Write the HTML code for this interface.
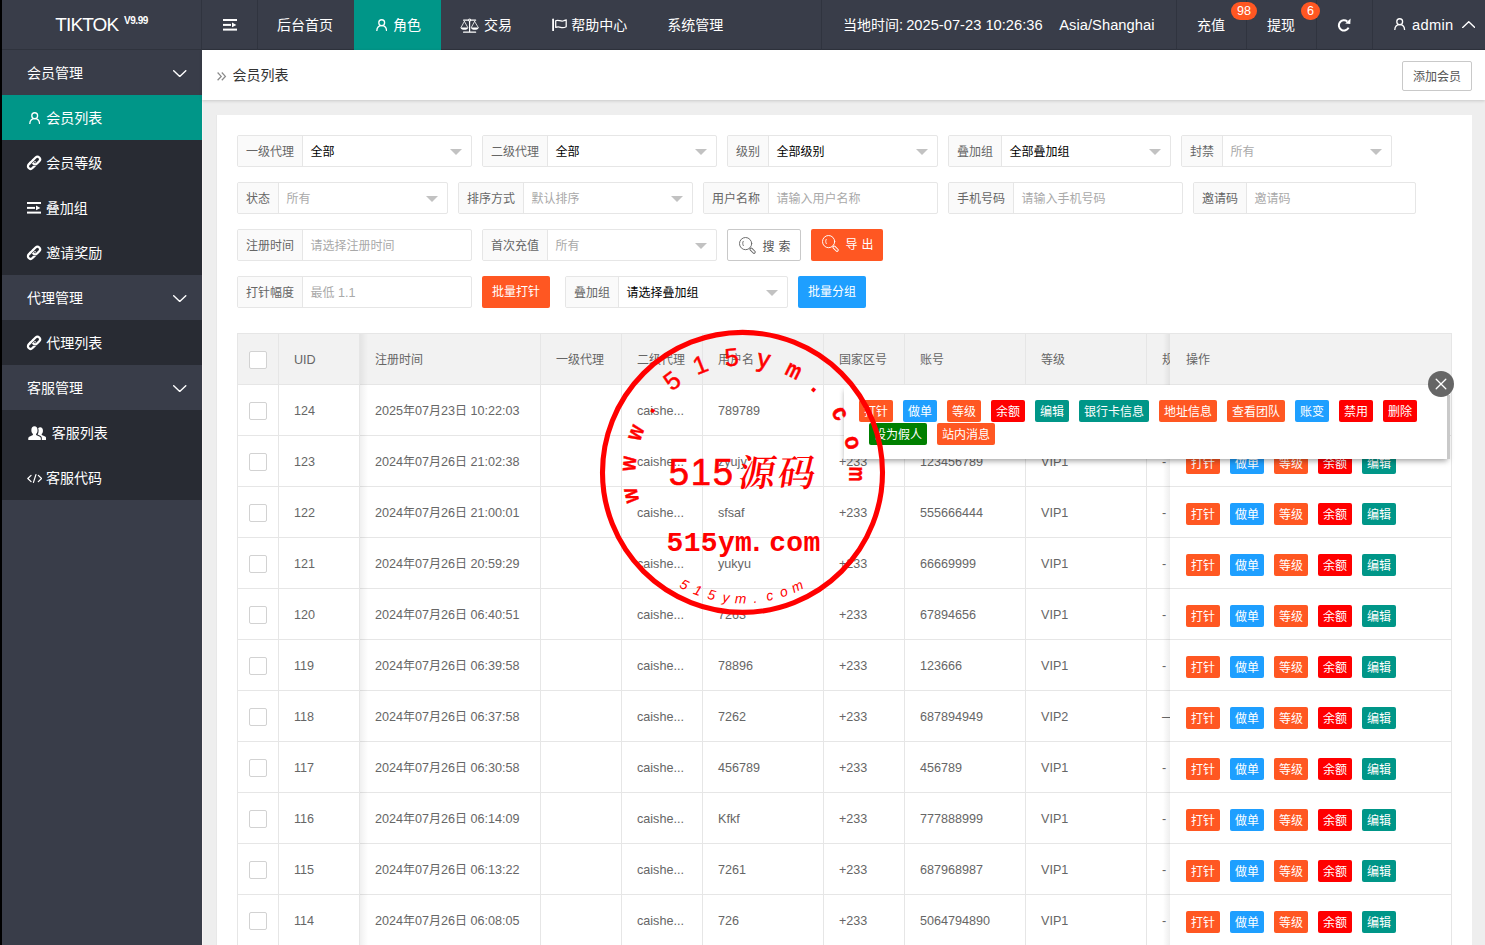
<!DOCTYPE html><html lang="zh-CN"><head><meta charset="utf-8"><title>会员列表</title><style>
*{box-sizing:border-box;margin:0;padding:0}
html,body{width:1485px;height:945px;overflow:hidden}
body{position:relative;background:#eee;font-family:"Liberation Sans","Noto Sans CJK SC",sans-serif;font-size:12px;color:#666;line-height:1}
.l{font-size:1.05em}
.abs{position:absolute}
#strip{left:0;top:0;width:2px;height:945px;background:#000;z-index:50}
#header{left:2px;top:0;width:1483px;height:50px;background:#393D49;color:#fff;font-size:14px;border-bottom:1px solid #2f333d}
#header .sep{position:absolute;top:0;width:1px;height:50px;background:#30343f}
#header .t{position:absolute;top:0;height:50px;line-height:50px;white-space:nowrap}
#header svg{position:absolute}
#side{left:2px;top:50px;width:200px;height:895px;background:#393D49;color:#fff;font-size:14px}
#side .it{position:absolute;left:0;width:200px;height:45px;line-height:45px;white-space:nowrap}
#side .sub{background:#282B33}
#side .act{background:#009688}
#side .it span.tx{position:absolute;top:1px}
#side svg{position:absolute}
#crumb{left:202px;top:50px;width:1283px;height:50px;background:#fff;box-shadow:0 1px 3px 0 rgba(0,0,0,.16);z-index:2}
#card{left:217px;top:115px;width:1255px;height:900px;background:#fff;box-shadow:-1px 0 0 #e8e8e8}
.grp{position:absolute;height:32px;border:1px solid #e6e6e6;border-radius:2px;background:#fff;overflow:hidden}
.grp .lb{position:absolute;left:0;top:0;height:30px;line-height:33px;background:#fafafa;border-right:1px solid #e6e6e6;text-align:center;color:#666}
.grp .v{position:absolute;top:0;height:30px;line-height:33px;color:#000;white-space:nowrap}
.grp .ph{color:#a9a9a9}
.grp .ar{position:absolute;top:12.5px;width:0;height:0;border:6px solid transparent;border-top-color:#c2c2c2;border-bottom-width:0}
.btn{position:absolute;height:32px;line-height:32px;border-radius:2px;color:#fff;text-align:center;white-space:nowrap}
.sb{position:absolute;height:22px;line-height:24px;overflow:hidden;width:34px;border-radius:2px;color:#fff;text-align:center;white-space:nowrap;font-size:12px}
.c-o{background:#FF5722}.c-b{background:#1E9FFF}.c-r{background:#FF0000}.c-g{background:#009688}.c-gr{background:#008000}
#tbl{left:237px;top:333px;width:1215px;height:620px;border-left:1px solid #e6e6e6;border-top:1px solid #e6e6e6;overflow:hidden}
.row{position:absolute;left:0;width:1215px;border-bottom:1px solid #e6e6e6;background:#fff}
.row.hd{background:#f2f2f2}
.cell{position:absolute;top:0;height:100%;border-right:1px solid #e6e6e6;padding-left:15px;white-space:nowrap;overflow:hidden}
.cell span.c{position:absolute;left:15px;top:50%;height:20px;line-height:20px;margin-top:-9px}
.ck{position:absolute;left:11px;top:50%;margin-top:-8px;width:18px;height:18px;border:1px solid #d2d2d2;border-radius:2px;background:#fff}
</style></head><body>
<div id="strip" class="abs"></div>
<div id="header" class="abs">
<div class="t" style="left:53.3px;font-size:19px;letter-spacing:-0.9px">TIKTOK</div>
<div class="t" style="left:122px;top:-4.5px;font-size:10px;font-weight:bold;letter-spacing:-0.45px">V9.99</div>
<div class="sep" style="left:199px"></div>
<div class="sep" style="left:255px"></div>
<div class="sep" style="left:819px"></div>
<div class="sep" style="left:1174px"></div>
<div class="sep" style="left:1244px"></div>
<div class="sep" style="left:1314px"></div>
<div class="sep" style="left:1370px"></div>
<svg style="left:221.2px;top:19px" width="14" height="12" viewBox="0 0 14 12" fill="#fff"><rect x="0" y="0" width="14" height="2"/><rect x="0" y="4.9" width="8" height="2"/><rect x="0" y="9.6" width="14" height="2"/><path d="M9 3.6L13.4 5.9L9 8.2Z"/></svg>
<div class="t" style="left:275px">后台首页</div>
<div class="abs" style="left:352px;top:0;width:87px;height:50px;background:#009688"></div>
<svg style="left:373.6px;top:18.8px" width="11.4" height="12.2" viewBox="0 0 12 13" fill="none" stroke="#fff" stroke-width="1.4" stroke-linecap="round"><circle cx="6" cy="3.9" r="3.1"/><path d="M0.8 12.6C0.9 9.2 3 7.1 6 7.1S11.1 9.2 11.2 12.6"/></svg>
<div class="t" style="left:391px">角色</div>
<svg style="left:458px;top:17.5px" width="20" height="15" viewBox="0 0 20 15" fill="none" stroke="#fff" stroke-linecap="round" stroke-linejoin="round"><g fill="#fff" stroke="none"><rect x="3" y="1.5" width="13.2" height="1.35" rx="0.6"/><rect x="9" y="2" width="1.2" height="12"/><rect x="3" y="13.5" width="13.2" height="1.3" rx="0.6"/></g><circle cx="9.6" cy="2" r="1.5" fill="#fff" stroke="none"/><circle cx="9.6" cy="2" r="0.5" fill="#393D49" stroke="none"/><path d="M4.4 3.4L1 9.5M4.4 3.4L7.8 9.5M14.6 3.4L11.3 9.5M14.6 3.4L18.3 9.5" stroke-width="0.8"/><path d="M0.6 9.5H8.1C8.1 11 6.5 11.8 4.35 11.8S0.6 11 0.6 9.5Z" fill="#fff" stroke="none"/><path d="M11 9.5H18.6C18.6 11 17 11.8 14.8 11.8S11 11 11 9.5Z" fill="#fff" stroke="none"/></svg>
<div class="t" style="left:482px">交易</div>
<svg style="left:549.8px;top:18.4px" width="16" height="13" viewBox="0 0 16 13" fill="none" stroke="#fff" stroke-linecap="round" stroke-linejoin="round"><path d="M1.1 1.3V12.4" stroke-width="1.8"/><path d="M3.7 2.7C6 1.3 8.4 3.7 11 3C12.4 2.6 13.4 2.1 14.2 1.8V8.7C12.2 9.8 10.6 10.1 8.6 9.3C6.8 8.6 5.4 8.5 3.7 9.4Z" stroke-width="1.25"/></svg>
<div class="t" style="left:569.3px">帮助中心</div>
<div class="t" style="left:665.3px">系统管理</div>
<div class="t" style="left:841px">当地时间<span class="l">:</span></div>
<div class="t" style="left:904.2px"><span class="l">2025-07-23 10:26:36</span></div>
<div class="t" style="left:1057.2px;letter-spacing:0.05px"><span class="l">Asia/Shanghai</span></div>
<div class="t" style="left:1195px">充值</div>
<div class="t" style="left:1265px">提现</div>
<div class="abs" style="left:1229px;top:2px;width:26px;height:18px;line-height:19.5px;border-radius:9px;background:#FF5722;font-size:12px;text-align:center"><span class="l">98</span></div>
<div class="abs" style="left:1299px;top:2px;width:19px;height:18px;line-height:19.5px;border-radius:9px;background:#FF5722;font-size:12px;text-align:center"><span class="l">6</span></div>
<svg style="left:1335px;top:17.8px" width="14.4" height="13.8" viewBox="0 0 14.4 13.8" fill="none" stroke="#fff" stroke-width="2" stroke-linecap="butt"><path d="M11.6 9.6A5.1 5.1 0 1 1 10.3 3.5"/><path d="M8.2 5.4L13.3 5.9L13.6 0.5Z" fill="#fff" stroke="none"/></svg>
<svg style="left:1392.3px;top:18.2px" width="11.4" height="12.2" viewBox="0 0 12 13" fill="none" stroke="#fff" stroke-width="1.4" stroke-linecap="round"><circle cx="6" cy="3.9" r="3.1"/><path d="M0.8 12.6C0.9 9.2 3 7.1 6 7.1S11.1 9.2 11.2 12.6"/></svg>
<div class="t" style="left:1410px;letter-spacing:0.3px"><span class="l">admin</span></div>
<svg style="left:1459.6px;top:21.3px" width="13.5" height="7.2" viewBox="0 0 13.5 7.2" fill="none" stroke="#fff" stroke-width="1.4" stroke-linecap="round" stroke-linejoin="round"><path d="M0.7 6.5L6.75 0.7L12.8 6.5"/></svg>
</div>
<div id="side" class="abs">
<div class="it" style="top:0px">
<span class="tx" style="left:25px">会员管理</span>
<svg style="left:171px;top:19.6px" width="13.5" height="7.2" viewBox="0 0 13.5 7.2" fill="none" stroke="#fff" stroke-width="1.4" stroke-linecap="round" stroke-linejoin="round"><path d="M0.7 0.7L6.75 6.5L12.8 0.7"/></svg>
</div>
<div class="it sub act" style="top:45px">
<svg style="left:26.6px;top:16.6px" width="11.4" height="12.2" viewBox="0 0 12 13" fill="none" stroke="#fff" stroke-width="1.4" stroke-linecap="round"><circle cx="6" cy="3.9" r="3.1"/><path d="M0.8 12.6C0.9 9.2 3 7.1 6 7.1S11.1 9.2 11.2 12.6"/></svg>
<span class="tx" style="left:44.3px">会员列表</span>
</div>
<div class="it sub" style="top:90px">
<svg style="left:24.2px;top:14.8px" width="16" height="16" viewBox="0 0 16 16" fill="none" stroke="#fff" stroke-width="2.45" stroke-linecap="round"><g transform="translate(8 7.8) scale(0.93) rotate(-45) translate(-8 -8)"><rect x="0" y="5.2" width="9" height="5.6" rx="2.8"/><rect x="7" y="5.2" width="9" height="5.6" rx="2.8" stroke="#282B33" stroke-width="3.9"/><rect x="7" y="5.2" width="9" height="5.6" rx="2.8"/><path d="M6.4 5.2H9" stroke="#282B33" stroke-width="3.7" stroke-linecap="butt"/><path d="M5 5.2H9.4"/></g></svg>
<span class="tx" style="left:44.3px">会员等级</span>
</div>
<div class="it sub" style="top:135px">
<svg style="left:25.4px;top:17.1px" width="14" height="12" viewBox="0 0 14 12" fill="#fff"><rect x="0" y="0" width="14" height="2"/><rect x="0" y="4.9" width="8" height="2"/><rect x="0" y="9.6" width="14" height="2"/><path d="M9 3.6L13.4 5.9L9 8.2Z"/></svg>
<span class="tx" style="left:43.8px">叠加组</span>
</div>
<div class="it sub" style="top:180px">
<svg style="left:24.2px;top:14.8px" width="16" height="16" viewBox="0 0 16 16" fill="none" stroke="#fff" stroke-width="2.45" stroke-linecap="round"><g transform="translate(8 7.8) scale(0.93) rotate(-45) translate(-8 -8)"><rect x="0" y="5.2" width="9" height="5.6" rx="2.8"/><rect x="7" y="5.2" width="9" height="5.6" rx="2.8" stroke="#282B33" stroke-width="3.9"/><rect x="7" y="5.2" width="9" height="5.6" rx="2.8"/><path d="M6.4 5.2H9" stroke="#282B33" stroke-width="3.7" stroke-linecap="butt"/><path d="M5 5.2H9.4"/></g></svg>
<span class="tx" style="left:44.3px">邀请奖励</span>
</div>
<div class="it" style="top:225px">
<span class="tx" style="left:25px">代理管理</span>
<svg style="left:171px;top:19.6px" width="13.5" height="7.2" viewBox="0 0 13.5 7.2" fill="none" stroke="#fff" stroke-width="1.4" stroke-linecap="round" stroke-linejoin="round"><path d="M0.7 0.7L6.75 6.5L12.8 0.7"/></svg>
</div>
<div class="it sub" style="top:270px">
<svg style="left:24.2px;top:14.8px" width="16" height="16" viewBox="0 0 16 16" fill="none" stroke="#fff" stroke-width="2.45" stroke-linecap="round"><g transform="translate(8 7.8) scale(0.93) rotate(-45) translate(-8 -8)"><rect x="0" y="5.2" width="9" height="5.6" rx="2.8"/><rect x="7" y="5.2" width="9" height="5.6" rx="2.8" stroke="#282B33" stroke-width="3.9"/><rect x="7" y="5.2" width="9" height="5.6" rx="2.8"/><path d="M6.4 5.2H9" stroke="#282B33" stroke-width="3.7" stroke-linecap="butt"/><path d="M5 5.2H9.4"/></g></svg>
<span class="tx" style="left:44.3px">代理列表</span>
</div>
<div class="it" style="top:315px">
<span class="tx" style="left:25px">客服管理</span>
<svg style="left:171px;top:19.6px" width="13.5" height="7.2" viewBox="0 0 13.5 7.2" fill="none" stroke="#fff" stroke-width="1.4" stroke-linecap="round" stroke-linejoin="round"><path d="M0.7 0.7L6.75 6.5L12.8 0.7"/></svg>
</div>
<div class="it sub" style="top:360px">
<svg style="left:25.5px;top:15.9px" width="18.5" height="14.5" viewBox="0 0 19 15" fill="#fff"><path d="M6.6 0.3C8.6 0.3 9.8 1.9 9.8 4.3C9.8 6 9.2 7.4 8.3 8.2V9.2L12.2 11C12.9 11.4 13.2 12 13.2 12.8V14.6H0.2V12.8C0.2 12 0.5 11.4 1.2 11L5 9.2V8.2C4.1 7.4 3.4 6 3.4 4.3C3.4 1.9 4.6 0.3 6.6 0.3Z"/><path d="M12.6 1.4C14.4 1.4 15.4 2.8 15.4 4.8C15.4 6.3 14.9 7.5 14.1 8.2V9.2L17.7 10.9C18.4 11.3 18.7 11.8 18.7 12.6V14.6H14.2V12.6C14.2 11.4 13.7 10.6 12.6 10.1L9.9 8.8C10.6 7.7 10.9 6.3 10.9 4.6C10.9 3.6 10.7 2.7 10.4 2.2C11 1.7 11.7 1.4 12.6 1.4Z"/></svg>
<span class="tx" style="left:49.8px">客服列表</span>
</div>
<div class="it sub" style="top:405px">
<svg style="left:24.5px;top:18.6px" width="15.4" height="9" viewBox="0 0 16 9.4" fill="none" stroke="#fff" stroke-width="1.3" stroke-linecap="round" stroke-linejoin="round"><path d="M4.2 1.4L0.8 4.7L4.2 8M11.8 1.4L15.2 4.7L11.8 8M9.3 0.7L6.7 8.7"/></svg>
<span class="tx" style="left:43.9px">客服代码</span>
</div>
</div>
<div id="crumb" class="abs">
<svg class="abs" style="left:15.3px;top:22px" width="9.4" height="8.8" viewBox="0 0 9.4 8.8" fill="none" stroke="#8a8a8a" stroke-width="1.25" stroke-linejoin="miter"><path d="M0.6 0.5L4.2 4.4L0.6 8.3M4.8 0.5L8.4 4.4L4.8 8.3"/></svg>
<div class="abs" style="left:30.4px;top:0;height:50px;line-height:50px;font-size:14px;color:#333">会员列表</div>
<div class="abs" style="left:1200px;top:11px;width:70px;height:30px;line-height:30px;border:1px solid #c9c9c9;border-radius:2px;text-align:center;color:#555;background:#fff">添加会员</div>
</div>
<div class="abs" style="left:202px;top:100px;width:1px;height:845px;background:#f8f3f3"></div>
<div id="card" class="abs"></div>
<div class="grp" style="left:237px;top:135px;width:235px"><div class="lb" style="width:65px">一级代理</div><div class="v" style="left:72.6px">全部</div><div class="ar" style="left:212px"></div></div>
<div class="grp" style="left:482px;top:135px;width:235px"><div class="lb" style="width:65px">二级代理</div><div class="v" style="left:72.6px">全部</div><div class="ar" style="left:212px"></div></div>
<div class="grp" style="left:727px;top:135px;width:211px"><div class="lb" style="width:41px">级别</div><div class="v" style="left:48.6px">全部级别</div><div class="ar" style="left:188px"></div></div>
<div class="grp" style="left:948px;top:135px;width:223px"><div class="lb" style="width:53px">叠加组</div><div class="v" style="left:60.6px">全部叠加组</div><div class="ar" style="left:200px"></div></div>
<div class="grp" style="left:1181px;top:135px;width:211px"><div class="lb" style="width:41px">封禁</div><div class="v ph" style="left:48.6px">所有</div><div class="ar" style="left:188px"></div></div>
<div class="grp" style="left:237px;top:182px;width:211px"><div class="lb" style="width:41px">状态</div><div class="v ph" style="left:48.6px">所有</div><div class="ar" style="left:188px"></div></div>
<div class="grp" style="left:458px;top:182px;width:235px"><div class="lb" style="width:65px">排序方式</div><div class="v ph" style="left:72.6px">默认排序</div><div class="ar" style="left:212px"></div></div>
<div class="grp" style="left:703px;top:182px;width:235px"><div class="lb" style="width:65px">用户名称</div><div class="v ph" style="left:72.6px">请输入用户名称</div></div>
<div class="grp" style="left:948px;top:182px;width:235px"><div class="lb" style="width:65px">手机号码</div><div class="v ph" style="left:72.6px">请输入手机号码</div></div>
<div class="grp" style="left:1193px;top:182px;width:223px"><div class="lb" style="width:53px">邀请码</div><div class="v ph" style="left:60.6px">邀请码</div></div>
<div class="grp" style="left:237px;top:229px;width:235px"><div class="lb" style="width:65px">注册时间</div><div class="v ph" style="left:72.6px">请选择注册时间</div></div>
<div class="grp" style="left:482px;top:229px;width:235px"><div class="lb" style="width:65px">首次充值</div><div class="v ph" style="left:72.6px">所有</div><div class="ar" style="left:212px"></div></div>
<div class="btn" style="left:727px;top:229px;width:74px;border:1px solid #c9c9c9;background:#fff;color:#555;line-height:31px"><svg style="position:absolute;left:11px;top:6.9px" width="17" height="17" viewBox="0 0 17 17" fill="none" stroke="#666" stroke-width="0.95" stroke-linecap="round"><circle cx="6.6" cy="6.6" r="6.1"/><path d="M4.2 4.3C3.5 5.3 3.5 7.2 4.3 8.6" stroke-width="0.9"/><rect x="-3.2" y="-1.2" width="6.4" height="2.4" rx="1.2" transform="translate(13.6 13.7) rotate(45)"/></svg><span style="position:absolute;left:34.4px;top:1.5px;letter-spacing:4px">搜索</span></div>
<div class="btn c-o" style="left:811px;top:229px;width:72px"><svg style="position:absolute;left:10.9px;top:6.1px" width="17" height="17" viewBox="0 0 17 17" fill="none" stroke="#fff" stroke-width="0.95" stroke-linecap="round"><circle cx="6.6" cy="6.6" r="6.1"/><path d="M4.2 4.3C3.5 5.3 3.5 7.2 4.3 8.6" stroke-width="0.9"/><rect x="-3.2" y="-1.2" width="6.4" height="2.4" rx="1.2" transform="translate(13.6 13.7) rotate(45)"/></svg><span style="position:absolute;left:34.5px;top:0px;letter-spacing:4px">导出</span></div>
<div class="grp" style="left:237px;top:276px;width:235px"><div class="lb" style="width:65px">打针幅度</div><div class="v ph" style="left:72.6px">最低 <span class="l">1.1</span></div></div>
<div class="btn c-o" style="left:482px;top:276px;width:68px;line-height:32.5px">批量打针</div>
<div class="grp" style="left:565px;top:276px;width:223px"><div class="lb" style="width:53px">叠加组</div><div class="v" style="left:60.6px">请选择叠加组</div><div class="ar" style="left:200px"></div></div>
<div class="btn c-b" style="left:798px;top:276px;width:68px;line-height:32.5px">批量分组</div>
<div id="tbl" class="abs">
<div class="row hd" style="top:0px;height:51px"><div class="cell" style="left:0px;width:41px"><i class="ck"></i></div><div class="cell" style="left:41px;width:81px"><span class="c"><span class="l">UID</span></span></div><div class="cell" style="left:122px;width:181px"><span class="c">注册时间</span></div><div class="cell" style="left:303px;width:81px"><span class="c">一级代理</span></div><div class="cell" style="left:384px;width:81px"><span class="c">二级代理</span></div><div class="cell" style="left:465px;width:121px"><span class="c">用户名</span></div><div class="cell" style="left:586px;width:81px"><span class="c">国家区号</span></div><div class="cell" style="left:667px;width:121px"><span class="c">账号</span></div><div class="cell" style="left:788px;width:121px"><span class="c">等级</span></div><div class="cell" style="left:909px;width:121px"><span class="c">规则</span></div><div class="abs" style="left:932px;top:0;width:282px;height:100%;background:#f2f2f2;border-right:1px solid #e6e6e6"><span class="abs" style="left:16px;top:50%;height:20px;line-height:20px;margin-top:-9px">操作</span></div></div>
<div class="row" style="top:51px;height:51px"><div class="cell" style="left:0px;width:41px"><i class="ck"></i></div><div class="cell" style="left:41px;width:81px"><span class="c"><span class="l">124</span></span></div><div class="cell" style="left:122px;width:181px"><span class="c"><span class="l">2025</span>年<span class="l">07</span>月<span class="l">23</span>日 <span class="l">10:22:03</span></span></div><div class="cell" style="left:303px;width:81px"></div><div class="cell" style="left:384px;width:81px"><span class="c"><span class="l">caishe...</span></span></div><div class="cell" style="left:465px;width:121px"><span class="c"><span class="l">789789</span></span></div><div class="cell" style="left:586px;width:81px"><span class="c"><span class="l">+233</span></span></div><div class="cell" style="left:667px;width:121px"><span class="c"><span class="l">888999</span></span></div><div class="cell" style="left:788px;width:121px"><span class="c"><span class="l">VIP1</span></span></div><div class="cell" style="left:909px;width:121px"><span class="c"><span class="l">-</span></span></div><div class="abs" style="left:932px;top:0;width:282px;height:100%;background:#fff;border-right:1px solid #e6e6e6"><span class="sb c-o" style="left:16px;top:16px">打针</span><span class="sb c-b" style="left:60px;top:16px">做单</span><span class="sb c-o" style="left:104px;top:16px">等级</span><span class="sb c-r" style="left:148px;top:16px">余额</span><span class="sb c-g" style="left:192px;top:16px">编辑</span></div></div>
<div class="row" style="top:102px;height:51px"><div class="cell" style="left:0px;width:41px"><i class="ck"></i></div><div class="cell" style="left:41px;width:81px"><span class="c"><span class="l">123</span></span></div><div class="cell" style="left:122px;width:181px"><span class="c"><span class="l">2024</span>年<span class="l">07</span>月<span class="l">26</span>日 <span class="l">21:02:38</span></span></div><div class="cell" style="left:303px;width:81px"></div><div class="cell" style="left:384px;width:81px"><span class="c"><span class="l">caishe...</span></span></div><div class="cell" style="left:465px;width:121px"><span class="c"><span class="l">zyujy</span></span></div><div class="cell" style="left:586px;width:81px"><span class="c"><span class="l">+233</span></span></div><div class="cell" style="left:667px;width:121px"><span class="c"><span class="l">123456789</span></span></div><div class="cell" style="left:788px;width:121px"><span class="c"><span class="l">VIP1</span></span></div><div class="cell" style="left:909px;width:121px"><span class="c"><span class="l">-</span></span></div><div class="abs" style="left:932px;top:0;width:282px;height:100%;background:#fff;border-right:1px solid #e6e6e6"><span class="sb c-o" style="left:16px;top:16px">打针</span><span class="sb c-b" style="left:60px;top:16px">做单</span><span class="sb c-o" style="left:104px;top:16px">等级</span><span class="sb c-r" style="left:148px;top:16px">余额</span><span class="sb c-g" style="left:192px;top:16px">编辑</span></div></div>
<div class="row" style="top:153px;height:51px"><div class="cell" style="left:0px;width:41px"><i class="ck"></i></div><div class="cell" style="left:41px;width:81px"><span class="c"><span class="l">122</span></span></div><div class="cell" style="left:122px;width:181px"><span class="c"><span class="l">2024</span>年<span class="l">07</span>月<span class="l">26</span>日 <span class="l">21:00:01</span></span></div><div class="cell" style="left:303px;width:81px"></div><div class="cell" style="left:384px;width:81px"><span class="c"><span class="l">caishe...</span></span></div><div class="cell" style="left:465px;width:121px"><span class="c"><span class="l">sfsaf</span></span></div><div class="cell" style="left:586px;width:81px"><span class="c"><span class="l">+233</span></span></div><div class="cell" style="left:667px;width:121px"><span class="c"><span class="l">555666444</span></span></div><div class="cell" style="left:788px;width:121px"><span class="c"><span class="l">VIP1</span></span></div><div class="cell" style="left:909px;width:121px"><span class="c"><span class="l">-</span></span></div><div class="abs" style="left:932px;top:0;width:282px;height:100%;background:#fff;border-right:1px solid #e6e6e6"><span class="sb c-o" style="left:16px;top:16px">打针</span><span class="sb c-b" style="left:60px;top:16px">做单</span><span class="sb c-o" style="left:104px;top:16px">等级</span><span class="sb c-r" style="left:148px;top:16px">余额</span><span class="sb c-g" style="left:192px;top:16px">编辑</span></div></div>
<div class="row" style="top:204px;height:51px"><div class="cell" style="left:0px;width:41px"><i class="ck"></i></div><div class="cell" style="left:41px;width:81px"><span class="c"><span class="l">121</span></span></div><div class="cell" style="left:122px;width:181px"><span class="c"><span class="l">2024</span>年<span class="l">07</span>月<span class="l">26</span>日 <span class="l">20:59:29</span></span></div><div class="cell" style="left:303px;width:81px"></div><div class="cell" style="left:384px;width:81px"><span class="c"><span class="l">caishe...</span></span></div><div class="cell" style="left:465px;width:121px"><span class="c"><span class="l">yukyu</span></span></div><div class="cell" style="left:586px;width:81px"><span class="c"><span class="l">+233</span></span></div><div class="cell" style="left:667px;width:121px"><span class="c"><span class="l">66669999</span></span></div><div class="cell" style="left:788px;width:121px"><span class="c"><span class="l">VIP1</span></span></div><div class="cell" style="left:909px;width:121px"><span class="c"><span class="l">-</span></span></div><div class="abs" style="left:932px;top:0;width:282px;height:100%;background:#fff;border-right:1px solid #e6e6e6"><span class="sb c-o" style="left:16px;top:16px">打针</span><span class="sb c-b" style="left:60px;top:16px">做单</span><span class="sb c-o" style="left:104px;top:16px">等级</span><span class="sb c-r" style="left:148px;top:16px">余额</span><span class="sb c-g" style="left:192px;top:16px">编辑</span></div></div>
<div class="row" style="top:255px;height:51px"><div class="cell" style="left:0px;width:41px"><i class="ck"></i></div><div class="cell" style="left:41px;width:81px"><span class="c"><span class="l">120</span></span></div><div class="cell" style="left:122px;width:181px"><span class="c"><span class="l">2024</span>年<span class="l">07</span>月<span class="l">26</span>日 <span class="l">06:40:51</span></span></div><div class="cell" style="left:303px;width:81px"></div><div class="cell" style="left:384px;width:81px"><span class="c"><span class="l">caishe...</span></span></div><div class="cell" style="left:465px;width:121px"><span class="c"><span class="l">7263</span></span></div><div class="cell" style="left:586px;width:81px"><span class="c"><span class="l">+233</span></span></div><div class="cell" style="left:667px;width:121px"><span class="c"><span class="l">67894656</span></span></div><div class="cell" style="left:788px;width:121px"><span class="c"><span class="l">VIP1</span></span></div><div class="cell" style="left:909px;width:121px"><span class="c"><span class="l">-</span></span></div><div class="abs" style="left:932px;top:0;width:282px;height:100%;background:#fff;border-right:1px solid #e6e6e6"><span class="sb c-o" style="left:16px;top:16px">打针</span><span class="sb c-b" style="left:60px;top:16px">做单</span><span class="sb c-o" style="left:104px;top:16px">等级</span><span class="sb c-r" style="left:148px;top:16px">余额</span><span class="sb c-g" style="left:192px;top:16px">编辑</span></div></div>
<div class="row" style="top:306px;height:51px"><div class="cell" style="left:0px;width:41px"><i class="ck"></i></div><div class="cell" style="left:41px;width:81px"><span class="c"><span class="l">119</span></span></div><div class="cell" style="left:122px;width:181px"><span class="c"><span class="l">2024</span>年<span class="l">07</span>月<span class="l">26</span>日 <span class="l">06:39:58</span></span></div><div class="cell" style="left:303px;width:81px"></div><div class="cell" style="left:384px;width:81px"><span class="c"><span class="l">caishe...</span></span></div><div class="cell" style="left:465px;width:121px"><span class="c"><span class="l">78896</span></span></div><div class="cell" style="left:586px;width:81px"><span class="c"><span class="l">+233</span></span></div><div class="cell" style="left:667px;width:121px"><span class="c"><span class="l">123666</span></span></div><div class="cell" style="left:788px;width:121px"><span class="c"><span class="l">VIP1</span></span></div><div class="cell" style="left:909px;width:121px"><span class="c"><span class="l">-</span></span></div><div class="abs" style="left:932px;top:0;width:282px;height:100%;background:#fff;border-right:1px solid #e6e6e6"><span class="sb c-o" style="left:16px;top:16px">打针</span><span class="sb c-b" style="left:60px;top:16px">做单</span><span class="sb c-o" style="left:104px;top:16px">等级</span><span class="sb c-r" style="left:148px;top:16px">余额</span><span class="sb c-g" style="left:192px;top:16px">编辑</span></div></div>
<div class="row" style="top:357px;height:51px"><div class="cell" style="left:0px;width:41px"><i class="ck"></i></div><div class="cell" style="left:41px;width:81px"><span class="c"><span class="l">118</span></span></div><div class="cell" style="left:122px;width:181px"><span class="c"><span class="l">2024</span>年<span class="l">07</span>月<span class="l">26</span>日 <span class="l">06:37:58</span></span></div><div class="cell" style="left:303px;width:81px"></div><div class="cell" style="left:384px;width:81px"><span class="c"><span class="l">caishe...</span></span></div><div class="cell" style="left:465px;width:121px"><span class="c"><span class="l">7262</span></span></div><div class="cell" style="left:586px;width:81px"><span class="c"><span class="l">+233</span></span></div><div class="cell" style="left:667px;width:121px"><span class="c"><span class="l">687894949</span></span></div><div class="cell" style="left:788px;width:121px"><span class="c"><span class="l">VIP2</span></span></div><div class="cell" style="left:909px;width:121px"><span class="c">—</span></div><div class="abs" style="left:932px;top:0;width:282px;height:100%;background:#fff;border-right:1px solid #e6e6e6"><span class="sb c-o" style="left:16px;top:16px">打针</span><span class="sb c-b" style="left:60px;top:16px">做单</span><span class="sb c-o" style="left:104px;top:16px">等级</span><span class="sb c-r" style="left:148px;top:16px">余额</span><span class="sb c-g" style="left:192px;top:16px">编辑</span></div></div>
<div class="row" style="top:408px;height:51px"><div class="cell" style="left:0px;width:41px"><i class="ck"></i></div><div class="cell" style="left:41px;width:81px"><span class="c"><span class="l">117</span></span></div><div class="cell" style="left:122px;width:181px"><span class="c"><span class="l">2024</span>年<span class="l">07</span>月<span class="l">26</span>日 <span class="l">06:30:58</span></span></div><div class="cell" style="left:303px;width:81px"></div><div class="cell" style="left:384px;width:81px"><span class="c"><span class="l">caishe...</span></span></div><div class="cell" style="left:465px;width:121px"><span class="c"><span class="l">456789</span></span></div><div class="cell" style="left:586px;width:81px"><span class="c"><span class="l">+233</span></span></div><div class="cell" style="left:667px;width:121px"><span class="c"><span class="l">456789</span></span></div><div class="cell" style="left:788px;width:121px"><span class="c"><span class="l">VIP1</span></span></div><div class="cell" style="left:909px;width:121px"><span class="c"><span class="l">-</span></span></div><div class="abs" style="left:932px;top:0;width:282px;height:100%;background:#fff;border-right:1px solid #e6e6e6"><span class="sb c-o" style="left:16px;top:16px">打针</span><span class="sb c-b" style="left:60px;top:16px">做单</span><span class="sb c-o" style="left:104px;top:16px">等级</span><span class="sb c-r" style="left:148px;top:16px">余额</span><span class="sb c-g" style="left:192px;top:16px">编辑</span></div></div>
<div class="row" style="top:459px;height:51px"><div class="cell" style="left:0px;width:41px"><i class="ck"></i></div><div class="cell" style="left:41px;width:81px"><span class="c"><span class="l">116</span></span></div><div class="cell" style="left:122px;width:181px"><span class="c"><span class="l">2024</span>年<span class="l">07</span>月<span class="l">26</span>日 <span class="l">06:14:09</span></span></div><div class="cell" style="left:303px;width:81px"></div><div class="cell" style="left:384px;width:81px"><span class="c"><span class="l">caishe...</span></span></div><div class="cell" style="left:465px;width:121px"><span class="c"><span class="l">Kfkf</span></span></div><div class="cell" style="left:586px;width:81px"><span class="c"><span class="l">+233</span></span></div><div class="cell" style="left:667px;width:121px"><span class="c"><span class="l">777888999</span></span></div><div class="cell" style="left:788px;width:121px"><span class="c"><span class="l">VIP1</span></span></div><div class="cell" style="left:909px;width:121px"><span class="c"><span class="l">-</span></span></div><div class="abs" style="left:932px;top:0;width:282px;height:100%;background:#fff;border-right:1px solid #e6e6e6"><span class="sb c-o" style="left:16px;top:16px">打针</span><span class="sb c-b" style="left:60px;top:16px">做单</span><span class="sb c-o" style="left:104px;top:16px">等级</span><span class="sb c-r" style="left:148px;top:16px">余额</span><span class="sb c-g" style="left:192px;top:16px">编辑</span></div></div>
<div class="row" style="top:510px;height:51px"><div class="cell" style="left:0px;width:41px"><i class="ck"></i></div><div class="cell" style="left:41px;width:81px"><span class="c"><span class="l">115</span></span></div><div class="cell" style="left:122px;width:181px"><span class="c"><span class="l">2024</span>年<span class="l">07</span>月<span class="l">26</span>日 <span class="l">06:13:22</span></span></div><div class="cell" style="left:303px;width:81px"></div><div class="cell" style="left:384px;width:81px"><span class="c"><span class="l">caishe...</span></span></div><div class="cell" style="left:465px;width:121px"><span class="c"><span class="l">7261</span></span></div><div class="cell" style="left:586px;width:81px"><span class="c"><span class="l">+233</span></span></div><div class="cell" style="left:667px;width:121px"><span class="c"><span class="l">687968987</span></span></div><div class="cell" style="left:788px;width:121px"><span class="c"><span class="l">VIP1</span></span></div><div class="cell" style="left:909px;width:121px"><span class="c"><span class="l">-</span></span></div><div class="abs" style="left:932px;top:0;width:282px;height:100%;background:#fff;border-right:1px solid #e6e6e6"><span class="sb c-o" style="left:16px;top:16px">打针</span><span class="sb c-b" style="left:60px;top:16px">做单</span><span class="sb c-o" style="left:104px;top:16px">等级</span><span class="sb c-r" style="left:148px;top:16px">余额</span><span class="sb c-g" style="left:192px;top:16px">编辑</span></div></div>
<div class="row" style="top:561px;height:51px"><div class="cell" style="left:0px;width:41px"><i class="ck"></i></div><div class="cell" style="left:41px;width:81px"><span class="c"><span class="l">114</span></span></div><div class="cell" style="left:122px;width:181px"><span class="c"><span class="l">2024</span>年<span class="l">07</span>月<span class="l">26</span>日 <span class="l">06:08:05</span></span></div><div class="cell" style="left:303px;width:81px"></div><div class="cell" style="left:384px;width:81px"><span class="c"><span class="l">caishe...</span></span></div><div class="cell" style="left:465px;width:121px"><span class="c"><span class="l">726</span></span></div><div class="cell" style="left:586px;width:81px"><span class="c"><span class="l">+233</span></span></div><div class="cell" style="left:667px;width:121px"><span class="c"><span class="l">5064794890</span></span></div><div class="cell" style="left:788px;width:121px"><span class="c"><span class="l">VIP1</span></span></div><div class="cell" style="left:909px;width:121px"><span class="c"><span class="l">-</span></span></div><div class="abs" style="left:932px;top:0;width:282px;height:100%;background:#fff;border-right:1px solid #e6e6e6"><span class="sb c-o" style="left:16px;top:16px">打针</span><span class="sb c-b" style="left:60px;top:16px">做单</span><span class="sb c-o" style="left:104px;top:16px">等级</span><span class="sb c-r" style="left:148px;top:16px">余额</span><span class="sb c-g" style="left:192px;top:16px">编辑</span></div></div>
<div class="abs" style="left:122px;top:0;width:8px;height:100%;background:linear-gradient(90deg,rgba(0,0,0,.06),rgba(0,0,0,0))"></div>
<div class="abs" style="left:925px;top:0;width:7px;height:100%;background:linear-gradient(270deg,rgba(0,0,0,.065),rgba(0,0,0,0))"></div>
</div>
<div class="abs" style="left:844px;top:385px;width:606px;height:74px;background:#fff;box-shadow:0 4px 6px -2px rgba(0,0,0,.28),-2px 3px 5px -2px rgba(0,0,0,.15);z-index:5">
<span class="sb c-o" style="left:15px;top:15px;width:34px">打针</span>
<span class="sb c-b" style="left:59px;top:15px;width:34px">做单</span>
<span class="sb c-o" style="left:103px;top:15px;width:34px">等级</span>
<span class="sb c-r" style="left:147px;top:15px;width:34px">余额</span>
<span class="sb c-g" style="left:191px;top:15px;width:34px">编辑</span>
<span class="sb c-g" style="left:235px;top:15px;width:70px">银行卡信息</span>
<span class="sb c-o" style="left:315px;top:15px;width:58px">地址信息</span>
<span class="sb c-o" style="left:383px;top:15px;width:58px">查看团队</span>
<span class="sb c-b" style="left:451px;top:15px;width:34px">账变</span>
<span class="sb c-r" style="left:495px;top:15px;width:34px">禁用</span>
<span class="sb c-r" style="left:539px;top:15px;width:34px">删除</span>
<span class="sb c-gr" style="left:25px;top:38.3px;width:58px">设为假人</span>
<span class="sb c-o" style="left:93px;top:38.3px;width:58px">站内消息</span>
<div class="abs" style="left:603px;top:10px;width:3px;height:64px;background:#c9c9c9"></div>
<div class="abs" style="left:583.5px;top:-14.2px;width:26px;height:26px;border-radius:13px;background:#666"><svg class="abs" style="left:7px;top:7px" width="12" height="12" viewBox="0 0 12 12" stroke="#fff" stroke-width="1.3" stroke-linecap="round"><path d="M1.2 1.2L10.8 10.8M10.8 1.2L1.2 10.8"/></svg></div>
</div>
<svg class="abs" style="left:0;top:0;z-index:8" width="1485" height="945" viewBox="0 0 1485 945" fill="#f00" font-family="Liberation Sans, sans-serif">
<circle cx="742.5" cy="472.4" r="140" fill="none" stroke="#f00" stroke-width="5.1"/>
<text transform="translate(742.5 472.4) rotate(-101.70) translate(0 -107) scale(0.8 1)" text-anchor="middle" font-size="23.5" font-weight="bold" stroke="#f00" stroke-width="0.5">w</text>
<text transform="translate(742.5 472.4) rotate(-85.65) translate(0 -107) scale(0.8 1)" text-anchor="middle" font-size="23.5" font-weight="bold" stroke="#f00" stroke-width="0.5">w</text>
<text transform="translate(742.5 472.4) rotate(-69.60) translate(0 -107) scale(0.8 1)" text-anchor="middle" font-size="23.5" font-weight="bold" stroke="#f00" stroke-width="0.5">w</text>
<text transform="translate(742.5 472.4) rotate(-55.55) translate(0 -107)" text-anchor="middle" font-size="25" font-weight="bold">.</text>
<text transform="translate(742.5 472.4) rotate(-37.50) translate(0 -107)" text-anchor="middle" font-size="25" stroke="#f00" stroke-width="0.45">5</text>
<text transform="translate(742.5 472.4) rotate(-21.45) translate(0 -107)" text-anchor="middle" font-size="25" stroke="#f00" stroke-width="0.45">1</text>
<text transform="translate(742.5 472.4) rotate(-5.40) translate(0 -107)" text-anchor="middle" font-size="25" stroke="#f00" stroke-width="0.45">5</text>
<text transform="translate(742.5 472.4) rotate(10.65) translate(0 -107)" text-anchor="middle" font-size="25" stroke="#f00" stroke-width="0.7">y</text>
<text transform="translate(742.5 472.4) rotate(26.70) translate(0 -107) scale(0.72 1)" text-anchor="middle" font-size="23.5" font-weight="bold" stroke="#f00" stroke-width="0.5">m</text>
<text transform="translate(742.5 472.4) rotate(40.75) translate(0 -107)" text-anchor="middle" font-size="25" font-weight="bold">.</text>
<text transform="translate(742.5 472.4) rotate(58.80) translate(0 -107) scale(0.95 1)" text-anchor="middle" font-size="23.5" font-weight="bold" stroke="#f00" stroke-width="0.5">c</text>
<text transform="translate(742.5 472.4) rotate(74.85) translate(0 -107) scale(0.93 1)" text-anchor="middle" font-size="23.5" font-weight="bold" stroke="#f00" stroke-width="0.5">o</text>
<text transform="translate(742.5 472.4) rotate(90.90) translate(0 -107) scale(0.72 1)" text-anchor="middle" font-size="23.5" font-weight="bold" stroke="#f00" stroke-width="0.5">m</text>
<text transform="translate(742.5 472.4) rotate(27.40) translate(0 131)" text-anchor="middle" font-style="italic" font-size="13.8">5</text>
<text transform="translate(742.5 472.4) rotate(20.77) translate(0 131)" text-anchor="middle" font-style="italic" font-size="13.8">1</text>
<text transform="translate(742.5 472.4) rotate(14.15) translate(0 131)" text-anchor="middle" font-style="italic" font-size="13.8">5</text>
<text transform="translate(742.5 472.4) rotate(7.52) translate(0 131)" text-anchor="middle" font-style="italic" font-size="13.8">y</text>
<text transform="translate(742.5 472.4) rotate(0.90) translate(0 131)" text-anchor="middle" font-style="italic" font-size="13.8">m</text>
<text transform="translate(742.5 472.4) rotate(-5.73) translate(0 131)" text-anchor="middle" font-style="italic" font-size="13.8">.</text>
<text transform="translate(742.5 472.4) rotate(-12.35) translate(0 131)" text-anchor="middle" font-style="italic" font-size="13.8">c</text>
<text transform="translate(742.5 472.4) rotate(-18.98) translate(0 131)" text-anchor="middle" font-style="italic" font-size="13.8">o</text>
<text transform="translate(742.5 472.4) rotate(-25.60) translate(0 131)" text-anchor="middle" font-style="italic" font-size="13.8">m</text>
<text x="668.8" y="484.7" font-size="36.5" letter-spacing="1.7" stroke="#f00" stroke-width="0.6">515</text>
<g transform="translate(737 486.3) skewX(-9)"><text x="0" y="0" font-family="Noto Serif CJK SC, serif" font-weight="600" font-size="37" letter-spacing="2.6">源码</text></g>
<text x="666.6" y="551.4" font-family="Liberation Mono, monospace" font-weight="bold" font-size="28" letter-spacing="0.3">515ym<tspan dx="-4">.</tspan><tspan dx="4">com</tspan></text>
</svg>
</body></html>
